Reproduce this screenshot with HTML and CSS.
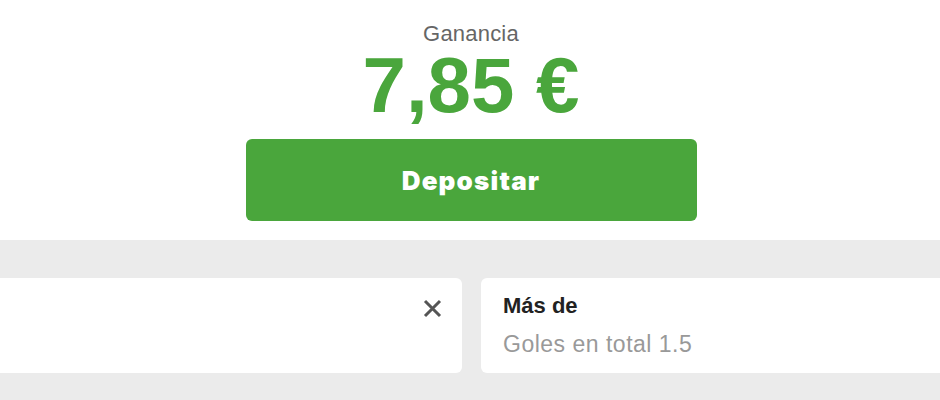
FILE: index.html
```html
<!DOCTYPE html>
<html lang="es">
  <head>
    <meta charset="UTF-8" />
    <title>Ganancia</title>
    <link rel="stylesheet" href="styles.css">
  </head>
  <body>
    <!-- Winnings summary -->
    <section class="summary">
      <p class="summary-label">Ganancia</p>
      <p class="summary-amount">7,85 €</p>
      <button class="deposit-btn" type="button">Depositar</button>
    </section>

    <!-- Selections carousel -->
    <section class="selections">
      <div class="selection-row">
        <div class="selection-card selection-card--closable">
          <button class="close-btn" type="button" aria-label="Cerrar">
            <svg width="19" height="19" viewBox="0 0 19 19">
              <path d="M2 2 L17 17 M17 2 L2 17" stroke="#555" stroke-width="3" fill="none" />
            </svg>
          </button>
        </div>
        <div class="selection-card">
          <p class="selection-title">Más de</p>
          <p class="selection-market">Goles en total 1.5</p>
        </div>
      </div>
    </section>
  </body>
</html>
```

FILE: styles.css
```css
* {
  margin: 0;
  padding: 0;
  box-sizing: border-box;
}

body {
  font-family: "Liberation Sans", Arial, sans-serif;
  background: #ebebeb;
  width: 940px;
  height: 400px;
  overflow: hidden;
}

/* Top white block with the amount */
.summary {
  background: #fff;
  height: 240px;
  padding-top: 21px;
  padding-left: 2px;
  display: flex;
  flex-direction: column;
  align-items: center;
}

.summary-label {
  font-size: 22px;
  line-height: 25px;
  letter-spacing: 0.2px;
  color: #666;
}

.summary-amount {
  font-size: 78px;
  line-height: 78px;
  font-weight: bold;
  color: #4aa63c;
}

.deposit-btn {
  margin-top: 15px;
  width: 451px;
  height: 82px;
  border: none;
  border-radius: 6px;
  background: #4aa63c;
  color: #fff;
  font-family: "Inter", sans-serif;
  font-weight: 900;
  font-size: 26px;
  letter-spacing: 1.2px;
  display: flex;
  align-items: center;
  justify-content: center;
  cursor: pointer;
}

/* Grey area with the bet cards */
.selections {
  padding-top: 38px;
}

.selection-row {
  display: flex;
  gap: 19px;
  margin-left: -10px;
}

.selection-card {
  flex: 0 0 472px;
  height: 95px;
  background: #fff;
  border-radius: 6px;
  padding: 15px 20px 0 22px;
}

.selection-card--closable {
  display: flex;
  justify-content: flex-end;
  align-items: flex-start;
  padding-top: 21px;
}

.close-btn {
  border: none;
  background: none;
  width: 19px;
  height: 19px;
  display: block;
  cursor: pointer;
}

.close-btn svg {
  display: block;
}

.selection-title {
  font-size: 22px;
  line-height: 26px;
  font-weight: bold;
  color: #222;
}

.selection-market {
  margin-top: 11px;
  font-size: 23px;
  line-height: 28px;
  letter-spacing: 0.5px;
  color: #999;
}
```
